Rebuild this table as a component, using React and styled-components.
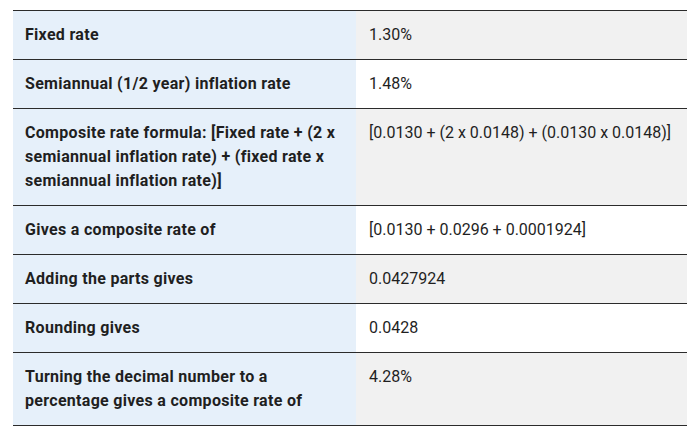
import React from 'react';
import styled, { createGlobalStyle } from 'styled-components';

const GlobalStyle = createGlobalStyle`
  html, body {
    margin: 0;
    padding: 0;
    background: #ffffff;
  }
  body {
    font-family: Roboto, "Liberation Sans", sans-serif;
    color: #1b1b1b;
  }
`;

const Wrapper = styled.div`
  padding: 10px 0 0 13px;
`;

const Table = styled.table`
  border-collapse: collapse;
  width: 100%;
  font-size: 16px;
  line-height: 24px;
`;

const Row = styled.tr`
  border-top: 1px solid #2b2b2b;
  border-bottom: 1px solid #2b2b2b;
`;

const Label = styled.th`
  width: 343px;
  box-sizing: border-box;
  background: #e6f0fa;
  text-align: left;
  vertical-align: top;
  font-weight: 700;
  letter-spacing: 0.3px;
  padding: 12px 12px;
  color: #1f1f1f;
`;

const Value = styled.td`
  background: ${(p) => (p.$shaded ? '#f1f1f1' : '#ffffff')};
  vertical-align: top;
  font-weight: 400;
  padding: 12px 13px;
  color: #1f1f1f;
`;

const rows = [
  { label: 'Fixed rate', value: '1.30%' },
  { label: 'Semiannual (1/2 year) inflation rate', value: '1.48%' },
  {
    label:
      'Composite rate formula: [Fixed rate + (2 x semiannual inflation rate) + (fixed rate x semiannual inflation rate)]',
    value: '[0.0130 + (2 x 0.0148) + (0.0130 x 0.0148)]',
  },
  { label: 'Gives a composite rate of', value: '[0.0130 + 0.0296 + 0.0001924]' },
  { label: 'Adding the parts gives', value: '0.0427924' },
  { label: 'Rounding gives', value: '0.0428' },
  {
    label: 'Turning the decimal number to a percentage gives a composite rate of',
    value: '4.28%',
  },
];

export default function App() {
  return (
    <Wrapper>
      <GlobalStyle />
      <Table>
        <tbody>
          {rows.map((row, i) => (
            <Row key={i}>
              <Label scope="row">{row.label}</Label>
              <Value $shaded={i % 2 === 0}>{row.value}</Value>
            </Row>
          ))}
        </tbody>
      </Table>
    </Wrapper>
  );
}
